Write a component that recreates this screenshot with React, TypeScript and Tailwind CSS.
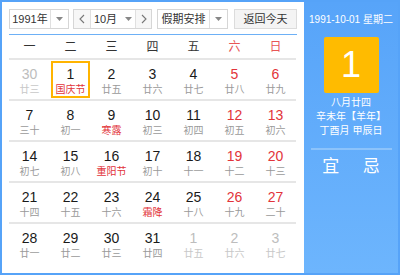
const FONT = "font-['Liberation_Sans','Noto_Sans_CJK_SC',sans-serif]";

type Day = { n: number; lunar: string; faded?: boolean; fest?: boolean; selected?: boolean };

const rows: Day[][] = [
  [
    { n: 30, lunar: "廿三", faded: true },
    { n: 1, lunar: "国庆节", fest: true, selected: true },
    { n: 2, lunar: "廿五" },
    { n: 3, lunar: "廿六" },
    { n: 4, lunar: "廿七" },
    { n: 5, lunar: "廿八" },
    { n: 6, lunar: "廿九" },
  ],
  [
    { n: 7, lunar: "三十" },
    { n: 8, lunar: "初一" },
    { n: 9, lunar: "寒露", fest: true },
    { n: 10, lunar: "初三" },
    { n: 11, lunar: "初四" },
    { n: 12, lunar: "初五" },
    { n: 13, lunar: "初六" },
  ],
  [
    { n: 14, lunar: "初七" },
    { n: 15, lunar: "初八" },
    { n: 16, lunar: "重阳节", fest: true },
    { n: 17, lunar: "初十" },
    { n: 18, lunar: "十一" },
    { n: 19, lunar: "十二" },
    { n: 20, lunar: "十三" },
  ],
  [
    { n: 21, lunar: "十四" },
    { n: 22, lunar: "十五" },
    { n: 23, lunar: "十六" },
    { n: 24, lunar: "霜降", fest: true },
    { n: 25, lunar: "十八" },
    { n: 26, lunar: "十九" },
    { n: 27, lunar: "二十" },
  ],
  [
    { n: 28, lunar: "廿一" },
    { n: 29, lunar: "廿二" },
    { n: 30, lunar: "廿三" },
    { n: 31, lunar: "廿四" },
    { n: 1, lunar: "廿五", faded: true },
    { n: 2, lunar: "廿六", faded: true },
    { n: 3, lunar: "廿七", faded: true },
  ],
];

const weekdays = ["一", "二", "三", "四", "五", "六", "日"];

function Caret() {
  return (
    <svg width="7" height="4" viewBox="0 0 7 4" className="block">
      <path d="M0 0h7L3.5 4z" fill="#888" />
    </svg>
  );
}

function Chevron({ dir }: { dir: "left" | "right" }) {
  return (
    <svg width="6" height="10" viewBox="0 0 6 10" className="block">
      <path
        d={dir === "left" ? "M5 1L1 5l4 4" : "M1 1l4 4-4 4"}
        fill="none"
        stroke="#777"
        strokeWidth="1.1"
      />
    </svg>
  );
}

function Select({ label, width, labelW }: { label: string; width: string; labelW: string }) {
  return (
    <div className={`flex h-[20px] ${width} border border-[#d6d6d6] bg-white`}>
      <div className={`flex ${labelW} items-center justify-center border-r border-[#e0e0e0] text-[11px] text-[#333]`}>
        {label}
      </div>
      <div className="flex flex-1 items-center justify-center">
        <Caret />
      </div>
    </div>
  );
}

function Cell({ d, col }: { d: Day; col: number }) {
  const weekend = col >= 5;
  const numColor = d.faded ? "text-[#bdbdbd]" : weekend ? "text-[#e2343a]" : "text-[#1a1a1a]";
  const lunarColor = d.faded ? "text-[#c8c8c8]" : d.fest ? "text-[#e2343a]" : "text-[#9a9a9a]";
  return (
    <div className="flex p-[1px]">
      <div
        className={`flex flex-1 flex-col items-center ${
          d.selected ? "border-2 border-[#ffb400] pt-[3px]" : "pt-[5px]"
        }`}
      >
        <span className={`text-[14px] leading-[16px] ${numColor}`}>{d.n}</span>
        <span className={`mt-[2px] text-[10px] leading-[12px] ${lunarColor}`}>{d.lunar}</span>
      </div>
    </div>
  );
}

export default function App() {
  return (
    <div className={`flex h-[275px] w-[400px] border-2 border-[#56a3f8] bg-white ${FONT}`}>
      {/* calendar */}
      <div className="w-[302px] pl-[7px] pt-[7px]">
        <div className="flex w-[288px] items-center">
          <Select label="1991年" width="w-[60px]" labelW="w-[41px]" />
          <div className="ml-[4px] flex h-[20px] w-[79px] border border-[#d6d6d6]">
            <div className="flex w-[17px] items-center justify-center border-r border-[#e0e0e0] bg-[#f7f7f7]">
              <Chevron dir="left" />
            </div>
            <div className="flex flex-1 items-center justify-center gap-[8px] text-[11px] text-[#333]">
              <span>10月</span>
              <Caret />
            </div>
            <div className="flex w-[16px] items-center justify-center border-l border-[#e0e0e0] bg-[#f7f7f7]">
              <Chevron dir="right" />
            </div>
          </div>
          <div className="ml-[5px]">
            <Select label="假期安排" width="w-[71px]" labelW="w-[52px]" />
          </div>
          <div className="ml-[6px] flex h-[20px] w-[63px] items-center justify-center border border-[#dcdcdc] bg-[#f4f4f4] text-[11px] text-[#333]">
            返回今天
          </div>
        </div>
        <div className="mt-[5px] h-[1px] w-[288px] bg-[#6db0f6]" />

        <div className="w-[287px]">
          <div className="grid h-[25px] grid-cols-7 border-b-2 border-[#e6e6e6]">
            {weekdays.map((w, i) => (
              <div
                key={w}
                className={`flex items-center justify-center text-[12px] ${i >= 5 ? "text-[#e85656]" : "text-[#333]"}`}
              >
                {w}
              </div>
            ))}
          </div>
          {rows.map((r, ri) => (
            <div
              key={ri}
              className={`grid h-[41px] grid-cols-7 ${ri < rows.length - 1 ? "border-b-2 border-[#e6e6e6]" : ""}`}
            >
              {r.map((d, ci) => (
                <Cell key={ci} d={d} col={ci} />
              ))}
            </div>
          ))}
        </div>
      </div>

      {/* side panel */}
      <div className="flex flex-1 flex-col items-center bg-gradient-to-b from-[#57a4f9] to-[#6db5fd] text-white">
        <div className="mt-[11px] whitespace-nowrap text-[10px] leading-[14px]">1991-10-01 星期二</div>
        <div className="mt-[10px] flex h-[56px] w-[55px] items-center justify-center rounded-[2px] bg-[#ffbb00] text-[36px] leading-none">
          1
        </div>
        <div className="mt-[3px] flex flex-col items-center whitespace-nowrap text-[10px] leading-[14px]">
          <span>八月廿四</span>
          <span>辛未年【羊年】</span>
          <span>丁酉月 甲辰日</span>
        </div>
        <div className="mt-[10px] h-[2px] w-[81px] bg-[#8cc3fb]" />
        <div className="mt-[6px] flex w-[81px] justify-around text-[17px] leading-[22px]">
          <span>宜</span>
          <span>忌</span>
        </div>
      </div>
    </div>
  );
}
